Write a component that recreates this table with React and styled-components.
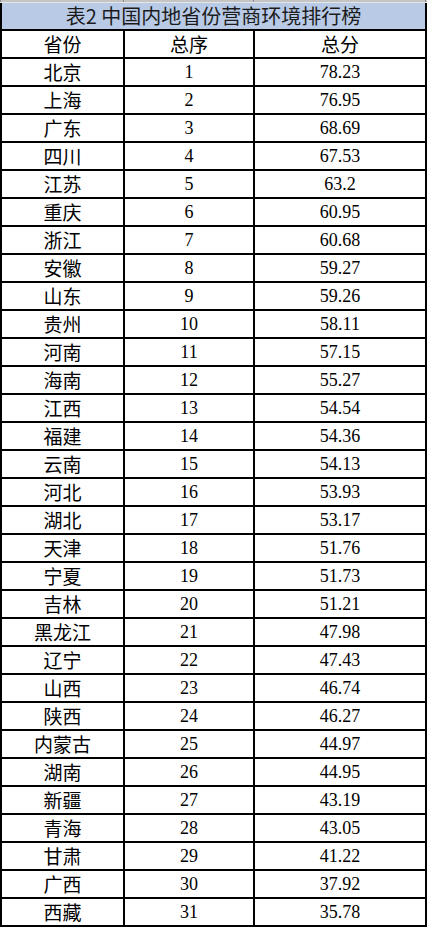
import React from 'react';
import styled, { createGlobalStyle } from 'styled-components';

const GlobalStyle = createGlobalStyle`
  html, body {
    margin: 0;
    padding: 0;
    background: #ffffff;
  }
  body {
    font-family: "Liberation Serif", "Noto Sans CJK SC", serif;
  }
`;

const rows = [
  ['北京', 1, '78.23'],
  ['上海', 2, '76.95'],
  ['广东', 3, '68.69'],
  ['四川', 4, '67.53'],
  ['江苏', 5, '63.2'],
  ['重庆', 6, '60.95'],
  ['浙江', 7, '60.68'],
  ['安徽', 8, '59.27'],
  ['山东', 9, '59.26'],
  ['贵州', 10, '58.11'],
  ['河南', 11, '57.15'],
  ['海南', 12, '55.27'],
  ['江西', 13, '54.54'],
  ['福建', 14, '54.36'],
  ['云南', 15, '54.13'],
  ['河北', 16, '53.93'],
  ['湖北', 17, '53.17'],
  ['天津', 18, '51.76'],
  ['宁夏', 19, '51.73'],
  ['吉林', 20, '51.21'],
  ['黑龙江', 21, '47.98'],
  ['辽宁', 22, '47.43'],
  ['山西', 23, '46.74'],
  ['陕西', 24, '46.27'],
  ['内蒙古', 25, '44.97'],
  ['湖南', 26, '44.95'],
  ['新疆', 27, '43.19'],
  ['青海', 28, '43.05'],
  ['甘肃', 29, '41.22'],
  ['广西', 30, '37.92'],
  ['西藏', 31, '35.78'],
];

const Sheet = styled.div`
  width: 427px;
`;

const ColumnStrip = styled.div`
  display: grid;
  grid-template-columns: 123px 130px 172px 2px;
  height: 3px;
  background: #c4c4c4;
  border-bottom: 1px solid #e6e6e6;
  box-sizing: border-box;
`;

const StripCell = styled.div`
  border-left: 1px solid #8e8e8e;
`;

const Table = styled.div`
  display: grid;
  grid-template-columns: 121px 128px 170px;
  grid-auto-rows: 26px;
  gap: 2px;
  padding: 0 2px 2px 2px;
  background: #000000;
`;

const Title = styled.div`
  grid-column: 1 / -1;
  background: #b8cae6;
  color: #1c1c1c;
  font-family: "Noto Sans CJK SC", "Liberation Sans", sans-serif;
  font-size: 20px;
  line-height: 26px;
  text-align: center;
`;

const Cell = styled.div`
  background: #ffffff;
  color: #000000;
  text-align: center;
  line-height: 26px;
  font-size: ${(p) => (p.$cjk ? '19px' : '18px')};
  font-family: ${(p) =>
    p.$cjk
      ? '"Noto Sans CJK SC", "Liberation Sans", sans-serif'
      : '"Liberation Serif", "Noto Sans CJK SC", serif'};
`;

const Footer = styled.div`
  height: 2px;
  background: #ffffff;
`;

export default function App() {
  return (
    <>
      <GlobalStyle />
      <Sheet>
        <ColumnStrip>
          <StripCell />
          <StripCell />
          <StripCell />
          <StripCell />
        </ColumnStrip>
        <Table>
          <Title>表2 中国内地省份营商环境排行榜</Title>
          <Cell $cjk>省份</Cell>
          <Cell $cjk>总序</Cell>
          <Cell $cjk>总分</Cell>
          {rows.map(([name, rank, score]) => (
            <React.Fragment key={name}>
              <Cell $cjk>{name}</Cell>
              <Cell>{rank}</Cell>
              <Cell>{score}</Cell>
            </React.Fragment>
          ))}
        </Table>
        <Footer />
      </Sheet>
    </>
  );
}
